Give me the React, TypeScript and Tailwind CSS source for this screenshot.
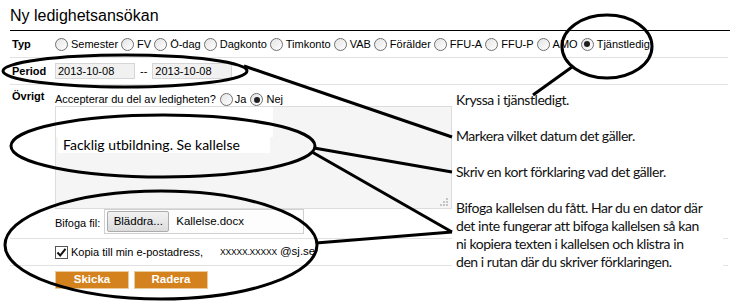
import React from "react";

function Radio({ checked }: { checked?: boolean }) {
  return (
    <span className="inline-flex w-[13px] h-[13px] shrink-0 items-center justify-center rounded-full border border-[#6f6f6f] bg-gradient-to-br from-[#e4e4e4] to-white">
      {checked && <span className="w-[6px] h-[6px] rounded-full bg-[#1e1e1e]" />}
    </span>
  );
}

const types = ["Semester", "FV", "Ö-dag", "Dagkonto", "Timkonto", "VAB", "Förälder", "FFU-A", "FFU-P", "AMO", "Tjänstledig"];

export default function App() {
  return (
    <div className="relative w-[739px] h-[304px] overflow-hidden bg-white text-[11px] text-black font-['Liberation_Sans',Arial,sans-serif]">
      <div className="ml-[10px] w-[720px]">
        {/* Title */}
        <div className="h-[31px] border-b border-black pt-[6px] text-[16px] leading-[20px]">Ny ledighetsansökan</div>

        {/* Typ */}
        <div className="flex h-[27px] items-center border-b border-[#e2e2e2] w-[718px]">
          <div className="w-[45px] pl-[2px] font-bold">Typ</div>
          <div className="flex items-center">
            {types.map((t) => (
              <label key={t} className="mr-[3px] flex items-center gap-[3px]">
                <Radio checked={t === "Tjänstledig"} />
                <span>{t}</span>
              </label>
            ))}
          </div>
        </div>

        {/* Period */}
        <div className="flex h-[27px] items-center border-b border-[#e2e2e2] w-[718px]">
          <div className="w-[45px] pl-[2px] font-bold">Period</div>
          <div className="flex h-[16px] w-[80px] items-center border border-[#d6d6d6] bg-[#f1f1f1] px-[2px]">2013-10-08</div>
          <span className="mx-[5px]">--</span>
          <div className="flex h-[16px] w-[80px] items-center border border-[#d6d6d6] bg-[#f1f1f1] px-[2px]">2013-10-08</div>
        </div>

        {/* Övrigt */}
        <div className="flex border-b border-[#e2e2e2] w-[718px]">
          <div className="w-[45px] pl-[2px] pt-[5px] font-bold leading-[13px]">Övrigt</div>
          <div className="flex flex-col">
            <div className="mt-[8px] flex h-[13px] items-center leading-[13px]">
              <span className="mr-[4px]">Accepterar du del av ledigheten?</span>
              <Radio />
              <span className="ml-[2px] mr-[4px]">Ja</span>
              <Radio checked />
              <span className="ml-[3px]">Nej</span>
            </div>
            <div className="relative h-[103px] w-[397px] border border-[#dcdcdc] bg-[#f5f5f5]">
              <div className="h-[30px] w-[217px] bg-white" />
              <div className="ml-[2px] flex h-[16px] w-[212px] items-center bg-white pl-[5px] text-[14px] font-['Lato',sans-serif] leading-[16px]">
                Facklig utbildning. Se kallelse
              </div>
              <svg className="absolute right-[2px] bottom-[1px]" width="10" height="10" viewBox="0 0 10 10">
                <g fill="#c4c4c4">
                  <rect x="7" y="1" width="2" height="2" />
                  <rect x="4" y="4" width="2" height="2" />
                  <rect x="7" y="4" width="2" height="2" />
                  <rect x="1" y="7" width="2" height="2" />
                  <rect x="4" y="7" width="2" height="2" />
                  <rect x="7" y="7" width="2" height="2" />
                </g>
              </svg>
            </div>
            <div className="flex h-[29px] items-start">
              <span className="mr-[4px] mt-[6px]">Bifoga fil:</span>
              <div className="flex h-[25px] w-[200px] items-center border border-[#d0d0d0] bg-[#fdfdfd] pl-[2px]">
                <div className="flex h-[21px] w-[62px] items-center justify-center rounded-[2px] border border-[#acacac] bg-gradient-to-b from-[#f2f2f2] to-[#dcdcdc] text-[11.5px]">Bläddra...</div>
                <span className="ml-[7px] text-[11.5px]">Kallelse.docx</span>
              </div>
            </div>
          </div>
        </div>

        {/* Kopia */}
        <div className="flex h-[27px] items-center border-b border-[#e2e2e2] w-[718px]">
          <div className="w-[45px]" />
          <span className="flex h-[13px] w-[13px] items-center justify-center border border-[#555] bg-white">
            <svg width="11" height="11" viewBox="0 0 11 11">
              <path d="M1.5 5.5 L4.2 8.5 L9.5 1.8" fill="none" stroke="#111" strokeWidth="2" />
            </svg>
          </span>
          <span className="ml-[3px]">Kopia till min e-postadress,</span>
          <span className="ml-[17px] text-[8.5px] tracking-[-0.2px]">XXXXX.XXXXX</span>
          <span className="ml-[3px] text-[11.5px]">@sj.se</span>
        </div>

        {/* Buttons */}
        <div className="flex gap-[5px] pl-[45px] pt-[5px]">
          <div className="flex h-[18px] w-[74px] items-center justify-center border border-[#ecc99a] bg-[#d4821e] text-[11.5px] font-bold text-white">Skicka</div>
          <div className="flex h-[18px] w-[74px] items-center justify-center border border-[#ecc99a] bg-[#d4821e] text-[11.5px] font-bold text-white">Radera</div>
        </div>
      </div>

      {/* Annotation text box */}
      <div className="absolute left-[452px] top-[88px] w-[271px] h-[184px] bg-white pt-[3px] pl-[4px] text-[14px] leading-[18px] tracking-[-0.45px] text-[#111] font-['Lato',sans-serif] whitespace-nowrap">
        <p className="mb-[18px]">Kryssa i tjänstledigt.</p>
        <p className="mb-[18px]">Markera vilket datum det gäller.</p>
        <p className="mb-[18px]">Skriv en kort förklaring vad det gäller.</p>
        <p>
          Bifoga kallelsen du fått. Har du en dator där
          <br />
          det inte fungerar att bifoga kallelsen så kan
          <br />
          ni kopiera texten i kallelsen och klistra in
          <br />
          den i rutan där du skriver förklaringen.
        </p>
      </div>

      {/* Annotation drawings */}
      <svg className="pointer-events-none absolute left-0 top-0" width="739" height="304" viewBox="0 0 739 304">
        <g fill="none" stroke="#000" strokeWidth="3">
          <ellipse cx="607" cy="46.5" rx="45" ry="31.5" />
          <line x1="572" y1="67" x2="533" y2="95" />
          <ellipse cx="125" cy="71" rx="122" ry="16" />
          <line x1="244" y1="66" x2="452" y2="137" />
          <ellipse cx="163" cy="146" rx="152" ry="31" />
          <line x1="314" y1="148" x2="452" y2="172" />
          <line x1="312" y1="152" x2="452" y2="232" />
          <ellipse cx="161" cy="245" rx="156" ry="54" />
          <line x1="316" y1="243" x2="452" y2="232" />
        </g>
      </svg>
    </div>
  );
}
